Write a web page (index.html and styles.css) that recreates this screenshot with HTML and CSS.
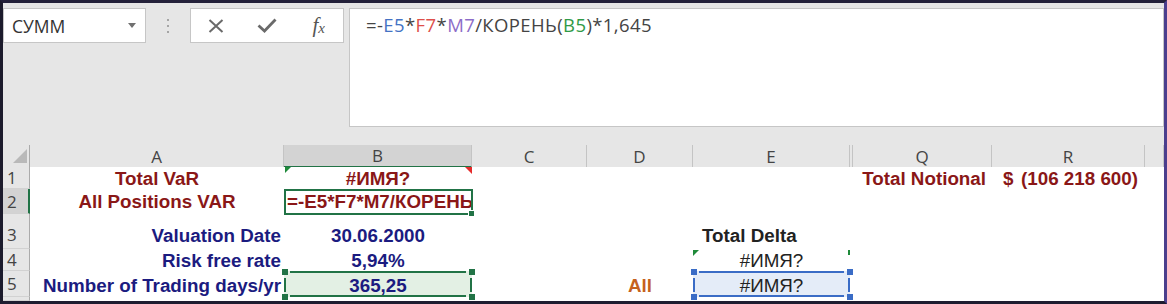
FILE: index.html
```html
<!DOCTYPE html>
<html>
<head>
<meta charset="utf-8">
<link rel="stylesheet" href="styles.css">
</head>
<body>
<div class="frame">
  <div class="toolbar">
    <div class="namebox"><span class="name">СУММ</span><span class="dd"></span></div>
    <div class="grip"><i></i><i></i><i></i></div>
    <div class="fxbox">
      <span class="btn"><svg width="16" height="14" viewBox="0 0 16 14"><path d="M1.5 1 L14.5 13 M14.5 1 L1.5 13" stroke="#6a6a6a" stroke-width="2" fill="none"/></svg></span>
      <span class="btn"><svg width="20" height="15" viewBox="0 0 20 15"><path d="M1.5 7.5 L7.5 13 L18.5 1.5" stroke="#6a6a6a" stroke-width="2.8" fill="none"/></svg></span>
      <span class="btn fx">f<span class="fxx">x</span></span>
    </div>
    <div class="formula">=-<span class="ref-b">E5</span>*<span class="ref-r">F7</span>*<span class="ref-p">M7</span>/КОРЕНЬ(<span class="ref-g">B5</span>)*1,645</div>
  </div>
  <div class="sheet">
    <div class="row hdr">
      <div class="corner"><svg width="26" height="21" viewBox="0 0 26 21"><path d="M24 4 L24 18 L10 18 Z" fill="#b9b9b9"/></svg></div>
      <div class="ch">A</div>
      <div class="ch sel">B</div>
      <div class="ch">C</div>
      <div class="ch">D</div>
      <div class="ch">E</div>
      <div class="ch"></div>
      <div class="ch">Q</div>
      <div class="ch">R</div>
      <div class="ch"></div>
    </div>

    <div class="row r1">
      <div class="rh">1</div>
      <div class="c center red">Total VaR</div>
      <div class="c center red pos">#ИМЯ?<span class="tri-g"></span><span class="tri-r"></span></div>
      <div class="c"></div>
      <div class="c"></div>
      <div class="c"></div>
      <div class="c"></div>
      <div class="c right red q">Total Notional</div>
      <div class="c acct red"><span>$</span><span>(106 218 600)</span></div>
      <div class="c"></div>
    </div>

    <div class="row r2">
      <div class="rh sel">2</div>
      <div class="c center red">All Positions VAR</div>
      <div class="c red pos active"><span class="clip">=-E5*F7*M7/КОРЕНЬ(B5)*1,645</span><span class="act"></span><span class="handle"></span></div>
      <div class="c"></div>
      <div class="c"></div>
      <div class="c"></div>
      <div class="c"></div>
      <div class="c"></div>
      <div class="c"></div>
      <div class="c"></div>
    </div>

    <div class="row r3">
      <div class="rh">3</div>
      <div class="c right navy">Valuation Date</div>
      <div class="c center navy">30.06.2000</div>
      <div class="c"></div>
      <div class="c"></div>
      <div class="c black delta">Total Delta</div>
      <div class="c"></div>
      <div class="c"></div>
      <div class="c"></div>
      <div class="c"></div>
    </div>

    <div class="row r4">
      <div class="rh">4</div>
      <div class="c right navy">Risk free rate</div>
      <div class="c center navy">5,94%</div>
      <div class="c"></div>
      <div class="c"></div>
      <div class="c center plain pos">#ИМЯ?<span class="tri-g e"></span><span class="tick"></span></div>
      <div class="c"></div>
      <div class="c"></div>
      <div class="c"></div>
      <div class="c"></div>
    </div>

    <div class="row r5">
      <div class="rh">5</div>
      <div class="c right navy">Number of Trading days/yr</div>
      <div class="c center navy pos fill-g">365,25
        <div class="rng green"><i class="ln t"></i><i class="ln b"></i><i class="ln l"></i><i class="ln r"></i><i class="sq tl"></i><i class="sq tr"></i><i class="sq bl"></i><i class="sq br"></i></div>
      </div>
      <div class="c"></div>
      <div class="c center orange">All</div>
      <div class="c center plain pos fill-b">#ИМЯ?
        <div class="rng blue"><i class="ln t"></i><i class="ln b"></i><i class="ln l"></i><i class="ln r"></i><i class="sq tl"></i><i class="sq tr"></i><i class="sq bl"></i><i class="sq br"></i></div>
      </div>
      <div class="c"></div>
      <div class="c"></div>
      <div class="c"></div>
      <div class="c"></div>
    </div>

    <div class="row r6">
      <div class="rh"></div>
      <div class="c"></div>
      <div class="c"></div>
      <div class="c"></div>
      <div class="c"></div>
      <div class="c"></div>
      <div class="c"></div>
      <div class="c"></div>
      <div class="c"></div>
      <div class="c"></div>
    </div>
  </div>
</div>
</body>
</html>
```

FILE: styles.css
```css
body {
  margin: 0;
  background: #1c1a2e;
}

.frame {
  width: 1167px;
  height: 304px;
  box-sizing: border-box;
  border-style: solid;
  border-width: 3px;
  border-color: #24213a #4b3e8d #1e1c30 #1c1b2c;
  background: #e6e6e6;
  overflow: hidden;
  display: flex;
  flex-direction: column;
}

/* ---------- formula bar ---------- */
.toolbar {
  height: 142px;
  flex: none;
  box-sizing: border-box;
  padding-top: 5px;
  display: flex;
  align-items: flex-start;
}

.namebox {
  width: 143px;
  height: 35px;
  box-sizing: border-box;
  border: 1px solid #c6c6c6;
  background: #fff;
  display: flex;
  align-items: center;
  justify-content: space-between;
  padding: 0 9px 0 8px;
  font: 17.5px/24px "Open Sans", sans-serif;
  color: #333;
}

.dd {
  width: 0;
  height: 0;
  border-left: 4.5px solid transparent;
  border-right: 4.5px solid transparent;
  border-top: 5px solid #707070;
}

.grip {
  width: 44px;
  height: 35px;
  display: flex;
  flex-direction: column;
  align-items: center;
  justify-content: center;
  gap: 4px;
}

.grip i {
  display: block;
  width: 2px;
  height: 2px;
  background: #a5a5a5;
}

.fxbox {
  width: 154px;
  height: 35px;
  box-sizing: border-box;
  border: 1px solid #c6c6c6;
  background: #fff;
  display: grid;
  grid-template-columns: repeat(3, 1fr);
  align-items: center;
  justify-items: center;
}

.btn {
  display: flex;
  align-items: center;
}

.fx {
  font: italic 21px/1 "Liberation Serif", serif;
  color: #555;
  margin-left: 2px;
}

.fxx {
  font-size: 15px;
  margin-top: 5px;
}

.formula {
  flex: 1;
  margin-left: 5px;
  height: 119px;
  box-sizing: border-box;
  border: 1px solid #c6c6c6;
  background: #fff;
  padding: 4px 0 0 16px;
  font: 18.5px/24px "Open Sans", sans-serif;
  letter-spacing: 0.4px;
  color: #444;
  white-space: nowrap;
}

.ref-b { color: #4472c4; }
.ref-r { color: #de4f4a; }
.ref-p { color: #8c6cc8; }
.ref-g { color: #2f9a46; }

/* ---------- sheet ---------- */
.sheet {
  flex: 1;
  display: flex;
  flex-direction: column;
  background: #fff;
}

.row {
  display: grid;
  grid-template-columns: 27px 254px 188px 115px 106px 157px 3px 139px 153px 1fr;
  flex: none;
}

.hdr { height: 22px; background: #e6e6e6; }
.r1 { height: 22px; }
.r2 { height: 25px; }
.r3 { height: 35px; }
.r4 { height: 22px; }
.r5 { height: 26px; }
.r6 { flex: 1; }

.corner {
  box-sizing: border-box;
  border-right: 1px solid #ababab;
  border-bottom: 1px solid #ababab;
  background: #e6e6e6;
}

.corner svg { display: block; }

.ch {
  box-sizing: border-box;
  border-right: 1px solid #c4c4c4;
  border-bottom: 1px solid #ababab;
  background: #e6e6e6;
  display: flex;
  align-items: center;
  justify-content: center;
  font: 17px/21px "Open Sans", sans-serif;
  color: #444;
}

.ch.sel {
  background: #d3d3d3;
  border-bottom: 2px solid #217346;
}

.rh {
  box-sizing: border-box;
  border-right: 1px solid #ababab;
  border-bottom: 1px solid #d2d2d2;
  background: #e6e6e6;
  display: flex;
  align-items: center;
  padding-left: 4px;
  font: 17px/21px "Open Sans", sans-serif;
  color: #444;
}

.rh.sel {
  background: #d3d3d3;
  border-right: 2px solid #217346;
}

.r3 .rh { padding-top: 7px; }

.c {
  display: flex;
  align-items: flex-end;
  white-space: nowrap;
  min-width: 0;
  font: bold 18.8px/21px "Liberation Sans", Arial, sans-serif;
  background: #fff;
}

.r2 .c { padding-bottom: 2px; }
.r3 .c { padding-bottom: 3px; }
.r5 .c { padding-bottom: 1px; }

.center { justify-content: center; }
.right { justify-content: flex-end; padding-right: 3px; }
.q { padding-right: 6px; }
.acct { justify-content: space-between; padding: 0 7px 0 11px; }
.delta { padding-left: 9px; }

.red { color: #8a1717; }
.navy { color: #1b1b80; }
.black { color: #222; }
.orange { color: #c5611d; }
.plain { font-weight: normal; color: #222; }

.pos { position: relative; }

.tri-g {
  position: absolute;
  top: 0;
  left: 1px;
  border-top: 6px solid #1f8a3a;
  border-right: 6px solid transparent;
}

.tri-g.e { top: 1px; left: 0; }

.tri-r {
  position: absolute;
  top: 0;
  right: 0;
  border-top: 7px solid #e52b2b;
  border-left: 7px solid transparent;
}

.tick {
  position: absolute;
  top: 1px;
  right: 0;
  width: 2px;
  height: 5px;
  background: #1f8a3a;
}

/* active cell */
.active { padding-left: 3px; }

.clip {
  overflow: hidden;
  flex: 1;
  min-width: 0;
}

.act {
  position: absolute;
  left: 0;
  top: 0;
  right: -1px;
  bottom: -1px;
  border: 2px solid #217346;
}

.handle {
  position: absolute;
  right: -3px;
  bottom: -3px;
  width: 5px;
  height: 5px;
  background: #217346;
  border: 1px solid #fff;
}

/* reference ranges */
.fill-g { background: #e3f0e4; }
.fill-b { background: #e4ecf8; }

.rng {
  position: absolute;
  left: 0;
  top: 0;
  right: 0;
  bottom: 0;
}

.rng i { position: absolute; display: block; }

.ln.t { top: 0; left: 6px; right: 6px; height: 2px; }
.ln.b { bottom: 0; left: 6px; right: 6px; height: 2px; }
.ln.l { left: 0; top: 7px; bottom: 5px; width: 2px; }
.ln.r { right: 0; top: 7px; bottom: 5px; width: 2px; }

.sq { width: 6px; height: 6px; }
.sq.tl { left: -2px; top: -2px; }
.sq.tr { right: -3px; top: -2px; }
.sq.bl { left: -2px; bottom: -3px; }
.sq.br { right: -3px; bottom: -3px; }

.green i { background: #217346; }
.blue i { background: #3a6cc6; }
```
